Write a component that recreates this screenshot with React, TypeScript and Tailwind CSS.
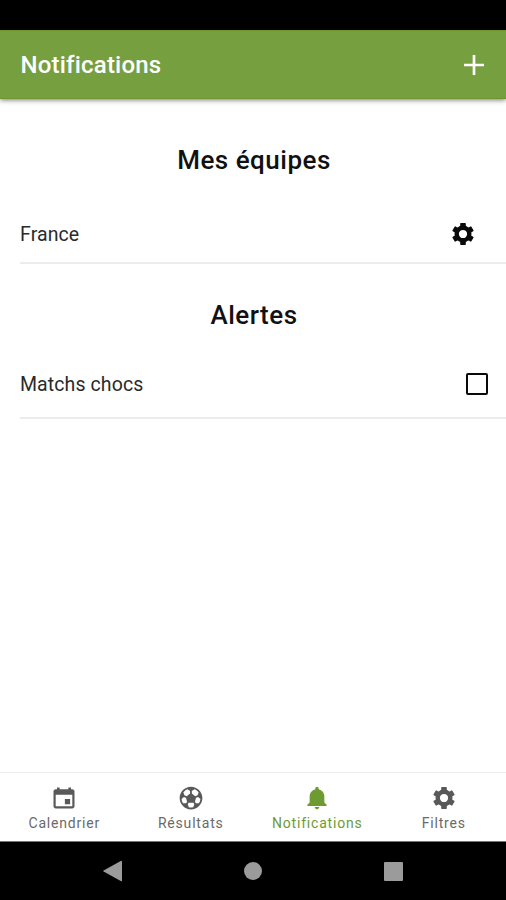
import React from 'react';
import { IoMdAdd, IoMdCalendar, IoMdFootball, IoMdNotifications } from 'react-icons/io';
import clsx from 'clsx';

interface IconProps {
  size?: number;
  className?: string;
}

interface TabItem {
  label: string;
  icon: React.ComponentType<IconProps>;
  active?: boolean;
}

const GearIcon: React.FC<IconProps> = ({ size = 28, className }) => (
  <svg width={size} height={size} viewBox="-14 -14 28 28" fill="currentColor" className={className}>
    <circle r="6.3" fill="none" stroke="currentColor" strokeWidth="4.4" />
    {[0, 60, 120, 180, 240, 300].map((angle) => (
      <rect
        key={angle}
        x="-2.8"
        y="-10.9"
        width="5.6"
        height="5"
        rx="0.7"
        transform={`rotate(${angle})`}
      />
    ))}
  </svg>
);

const tabs: TabItem[] = [
  { label: 'Calendrier', icon: IoMdCalendar },
  { label: 'Résultats', icon: IoMdFootball },
  { label: 'Notifications', icon: IoMdNotifications, active: true },
  { label: 'Filtres', icon: GearIcon }
];

const Header: React.FC = () => (
  <header className="relative flex h-[69px] shrink-0 items-center justify-between border-y border-[#6d972c] bg-[#769f40] pl-[20.5px] pr-4 text-white shadow-[0_1px_5px_rgba(0,0,0,0.55)]">
    <h1 className="text-[24px] font-medium leading-none tracking-[0.2px]">Notifications</h1>
    <button aria-label="Ajouter">
      <IoMdAdd size={32} />
    </button>
  </header>
);

const SectionTitle: React.FC<{ children: React.ReactNode }> = ({ children }) => (
  <h2 className="pl-0.5 text-center text-[26px] font-medium leading-8 tracking-[0.5px] text-[#111]">
    {children}
  </h2>
);

const TabBar: React.FC = () => (
  <nav className="-mr-px flex h-[70px] shrink-0 border-b border-t border-b-[#777] border-t-[#ededed] bg-white pl-px">
    {tabs.map(({ label, icon: Icon, active }) => (
      <button
        key={label}
        className={clsx(
          'flex flex-1 flex-col items-center pt-[11px]',
          active ? 'text-[#6d9b32]' : 'text-[#595959]'
        )}
      >
        <Icon size={28} />
        <span className={clsx('mt-[3px] text-[14px] leading-4 tracking-[0.8px]', !active && 'text-[#6a6a6a]')}>
          {label}
        </span>
      </button>
    ))}
  </nav>
);

const SystemBar: React.FC = () => (
  <div className="flex h-[58px] shrink-0 items-center bg-black pl-[103px] text-[#9b9b9b]">
    <svg width="19" height="22" viewBox="0 0 19 22" fill="currentColor">
      <path d="M19 1.2v19.6c0 .5-.4.6-.8.4L.6 11.5a.6.6 0 0 1 0-1L18.2.8c.4-.2.8 0 .8.4z" />
    </svg>
    <div className="ml-[122px] h-[18px] w-[18px] rounded-full bg-[#9b9b9b]" />
    <div className="ml-[122px] h-[19px] w-[19px] rounded-[1px] bg-[#9b9b9b]" />
  </div>
);

export default function App() {
  return (
    <div className="flex h-[900px] w-[506px] flex-col overflow-hidden bg-white font-['Roboto',sans-serif]">
      <div className="h-[30px] shrink-0 bg-black" />
      <Header />

      <main className="flex-1 pt-[45px]">
        <SectionTitle>Mes équipes</SectionTitle>
        <div className="ml-5 mt-7 flex h-[60px] items-center justify-between border-b-2 border-[#ececec] pr-[29px] pt-0.5">
          <span className="pt-px text-[19.5px] leading-6 tracking-[0.1px] text-[#2a2a2a]">France</span>
          <GearIcon size={28} className="text-[#0a0a0a]" />
        </div>

        <div className="mt-[35px]">
          <SectionTitle>Alertes</SectionTitle>
        </div>
        <label className="ml-5 mt-5 flex h-[68px] items-center justify-between border-b-2 border-[#ececec] pr-[18px]">
          <span className="pt-px text-[19.5px] leading-6 tracking-[0.1px] text-[#2a2a2a]">Matchs chocs</span>
          <span className="h-[22px] w-[22px] rounded-[2px] border-2 border-[#0a0a0a]" />
        </label>
      </main>

      <TabBar />
      <SystemBar />
    </div>
  );
}
